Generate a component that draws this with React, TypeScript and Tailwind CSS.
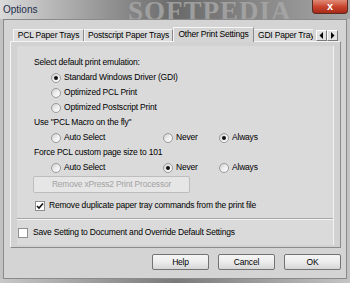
import React from 'react'

function Radio({ checked }: { checked?: boolean }) {
  return (
    <span className="w-[10px] h-[10px] rounded-full border border-[#9a9a9a] bg-gradient-to-br from-[#cfcfcf] via-[#eeeeee] to-white flex items-center justify-center shrink-0">
      {checked && <span className="w-[4px] h-[4px] rounded-full bg-[#111]" />}
    </span>
  )
}

function Check({ checked }: { checked?: boolean }) {
  return (
    <span className="w-[10px] h-[10px] border border-[#8f8f8f] bg-white flex items-center justify-center shrink-0">
      {checked && (
        <svg width="8" height="8" viewBox="0 0 8 8">
          <path d="M1 4 L3 6 L7 1.5" stroke="#111" strokeWidth="1.6" fill="none" />
        </svg>
      )}
    </span>
  )
}

function Opt({ label, checked }: { label: string; checked?: boolean }) {
  return (
    <div className="flex items-center gap-[3px] h-[15px]">
      <Radio checked={checked} />
      <span>{label}</span>
    </div>
  )
}

function Tab({ label, w, selected }: { label: string; w: string; selected?: boolean }) {
  if (selected) {
    return (
      <div
        className={`${w} h-[15px] shrink-0 bg-[#d4d4d4] border-t border-l border-t-[#f6f6f6] border-l-[#f6f6f6] border-r border-r-[#8a8a8a] flex items-center justify-center pb-[1px]`}
      >
        {label}
      </div>
    )
  }
  return (
    <div
      className={`${w} h-[12px] mt-[2px] shrink-0 bg-[#dcdcdc] border-t border-l border-t-[#f4f4f4] border-l-[#f4f4f4] border-r border-r-[#8a8a8a] flex items-center justify-center whitespace-nowrap`}
    >
      {label}
    </div>
  )
}

function Arrow({ dir }: { dir: 'l' | 'r' }) {
  return (
    <div className="w-[11px] h-[11px] bg-[#e2e2e2] border border-t-white border-l-white border-r-[#7a7a7a] border-b-[#7a7a7a] flex items-center justify-center">
      <svg width="5" height="7" viewBox="0 0 5 7">
        {dir === 'l' ? <path d="M4 0 L0.5 3.5 L4 7 Z" fill="#000" /> : <path d="M1 0 L4.5 3.5 L1 7 Z" fill="#000" />}
      </svg>
    </div>
  )
}

function Btn({ label }: { label: string }) {
  return (
    <div className="w-[57px] h-[16px] rounded-[2px] border border-[#737373] bg-gradient-to-b from-[#f6f6f6] via-[#ececec] to-[#d6d6d6] flex items-center justify-center">
      {label}
    </div>
  )
}

export default function App() {
  return (
    <div className="w-[350px] h-[283px] overflow-hidden flex flex-col bg-[#c2c2c2] font-['Liberation_Sans',Arial,sans-serif] text-[8.5px] tracking-[-0.2px] text-black">
      {/* title bar */}
      <div className="relative h-[19px] shrink-0 flex items-center pl-[3px] bg-gradient-to-r from-[#dadada] via-[#6a6a6a] to-[#a8a8a8] overflow-hidden">
        <span className="absolute left-[128px] top-[-9px] text-[27px] font-bold tracking-[1px] text-[#a9a9a9] font-['Liberation_Serif',serif] opacity-80">
          SOFTPEDIA
        </span>
        <span className="relative text-[10px] tracking-[0px] text-[#1d2d4a]">Options</span>
        <div className="absolute right-[2px] top-0 w-[36px] h-[14px] rounded-b-[4px] border border-t-0 border-[#5b2a22] bg-gradient-to-b from-[#df8a76] via-[#c9452f] to-[#a82a18] flex items-center justify-center">
          <span className="text-white font-bold text-[11px] leading-none mt-[-1px]">x</span>
        </div>
      </div>

      <div className="pl-[3px] shrink-0">
        <div className="w-[344px] h-[260px] border border-[#8a8a8a] bg-[#d4d4d4] flex flex-col pt-[7px]">
          {/* tabs */}
          <div className="flex ml-[6px] h-[15px] -mb-[1px] relative z-10">
            <div className="flex w-[303px] pl-[3px] overflow-hidden">
              <Tab label="PCL Paper Trays" w="w-[71px]" />
              <Tab label="Postscript Paper Trays" w="w-[89px]" />
              <Tab label="Other Print Settings" w="w-[81px]" selected />
              <div className="w-[70px] h-[12px] mt-[2px] shrink-0 bg-[#dcdcdc] border-t border-t-[#f4f4f4] flex items-center pl-[4px] whitespace-nowrap">
                GDI Paper Trays
              </div>
            </div>
            <div className="flex ml-[3px] mt-[3px]">
              <Arrow dir="l" />
              <Arrow dir="r" />
            </div>
          </div>

          {/* panel */}
          <div className="ml-[6px] w-[331px] h-[207px] shrink-0 bg-[#d2d2d2] border border-t-[#f4f4f4] border-l-[#f4f4f4] border-r-[#8a8a8a] border-b-[#8a8a8a] pt-[4px] px-[6px] pb-[1px]">
            <div className="h-[199px] bg-[#dadada] border-r border-r-[#f2f2f2] flex flex-col">
              <div className="h-[173px] border-b border-b-[#a6a6a6] pl-[17px] pt-[9px] flex flex-col">
                <div className="h-[15px] flex items-center">Select default print emulation:</div>
                <div className="pl-[17px]">
                  <Opt label="Standard Windows Driver (GDI)" checked />
                  <Opt label="Optimized PCL Print" />
                  <Opt label="Optimized Postscript Print" />
                </div>
                <div className="h-[15px] flex items-center">Use "PCL Macro on the fly"</div>
                <div className="pl-[17px] grid grid-cols-[112px_56px_auto]">
                  <Opt label="Auto Select" />
                  <Opt label="Never" />
                  <Opt label="Always" checked />
                </div>
                <div className="h-[15px] flex items-center">Force PCL custom page size to 101</div>
                <div className="pl-[17px] grid grid-cols-[112px_56px_auto]">
                  <Opt label="Auto Select" />
                  <Opt label="Never" checked />
                  <Opt label="Always" />
                </div>
                <div className="mt-[1px] -ml-[1px] w-[157px] h-[17px] rounded-[2px] border border-[#bdbdbd] bg-[#e6e6e6] text-[#a3a3a3] flex items-center justify-center">
                  Remove xPress2 Print Processor
                </div>
                <div className="mt-[5px] h-[15px] flex items-center gap-[4px] pl-[1px]">
                  <Check checked />
                  <span>Remove duplicate paper tray commands from the print file</span>
                </div>
              </div>
              <div className="flex-1 flex items-center gap-[5px] pl-[1px] border-t border-t-[#f4f4f4]">
                <Check />
                <span>Save Setting to Document and Override Default Settings</span>
              </div>
            </div>
          </div>

          {/* buttons */}
          <div className="flex justify-end gap-[9px] pr-[5px] mt-[6px]">
            <Btn label="Help" />
            <Btn label="Cancel" />
            <Btn label="OK" />
          </div>
        </div>
      </div>
      <div className="flex-1 bg-gradient-to-r from-[#c8c8c8] via-[#7a7a7a] to-[#c4c4c4]" />
    </div>
  )
}
